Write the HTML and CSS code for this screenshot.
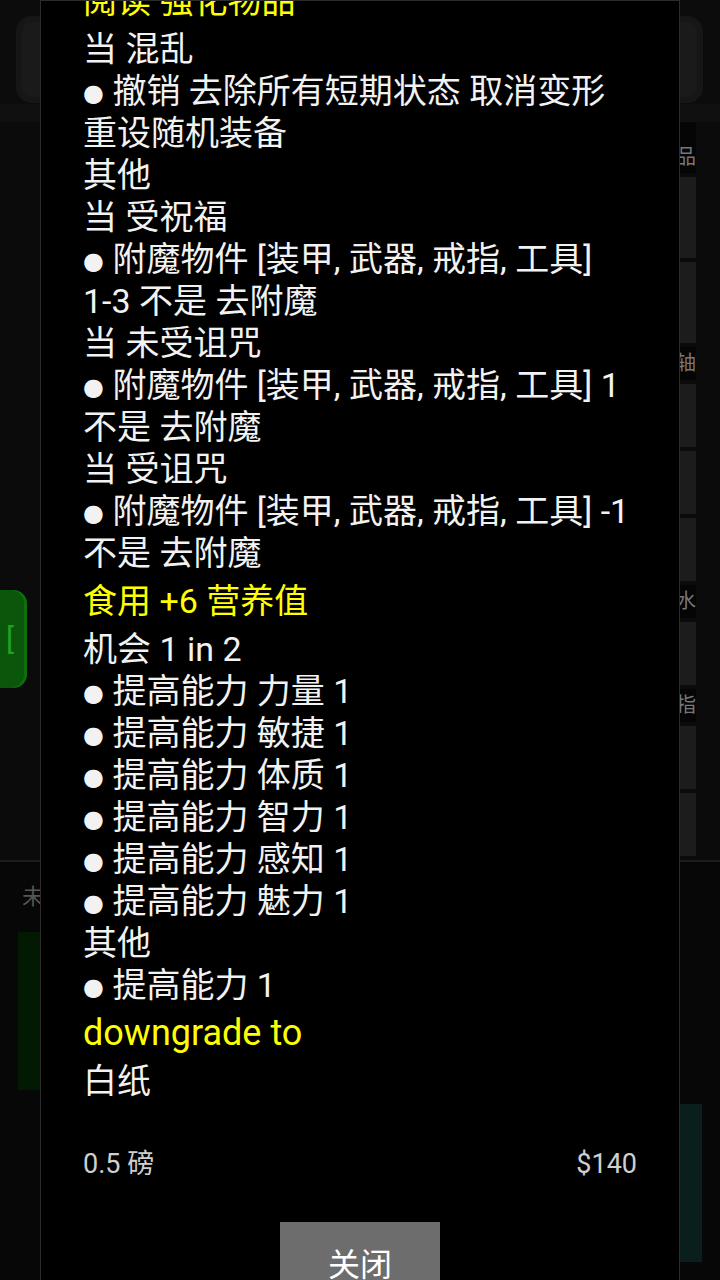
FILE: index.html
```html
<!DOCTYPE html>
<html>
<head>
    <title>物品详情</title>
    <link rel="stylesheet" href="styles.css">
</head>
<body>
    <div class="screen">
        <header class="topbar">
            <div class="tb-btn tb-left"></div>
            <div class="tb-btn tb-right"><span class="ring"></span></div>
        </header>

        <section class="middle">
            <div class="side-left">
                <div class="pill"><span>[</span></div>
            </div>
            <div class="side-right">
                <div class="cat">物品</div>
                <div class="slot tall"></div>
                <div class="slot tall"></div>
                <div class="cat">卷轴</div>
                <div class="slot"></div>
                <div class="slot"></div>
                <div class="slot"></div>
                <div class="cat">药水</div>
                <div class="slot"></div>
                <div class="cat">戒指</div>
                <div class="slot"></div>
                <div class="slot"></div>
            </div>
        </section>

        <section class="lower">
            <div class="low-left">
                <div class="low-label">未</div>
                <div class="green-box"></div>
            </div>
            <div class="low-right">
                <div class="teal-box"></div>
            </div>
        </section>
    </div>

    <div class="dialog">
        <div class="dialog-body">
            <p class="head">阅读 强化物品</p>
            <p>当 混乱</p>
            <p class="item"><span class="dot">●</span> 撤销 去除所有短期状态 取消变形 重设随机装备</p>
            <p>其他</p>
            <p>当 受祝福</p>
            <p class="item"><span class="dot">●</span> 附魔物件 [装甲, 武器, 戒指, 工具]<br>1-3 不是 去附魔</p>
            <p>当 未受诅咒</p>
            <p class="item"><span class="dot">●</span> 附魔物件 [装甲, 武器, 戒指, 工具] 1 不是 去附魔</p>
            <p>当 受诅咒</p>
            <p class="item"><span class="dot">●</span> 附魔物件 [装甲, 武器, 戒指, 工具] -1 不是 去附魔</p>

            <p class="head">食用 +6 营养值</p>
            <p>机会 1 in 2</p>
            <p class="item"><span class="dot">●</span> 提高能力 力量 1</p>
            <p class="item"><span class="dot">●</span> 提高能力 敏捷 1</p>
            <p class="item"><span class="dot">●</span> 提高能力 体质 1</p>
            <p class="item"><span class="dot">●</span> 提高能力 智力 1</p>
            <p class="item"><span class="dot">●</span> 提高能力 感知 1</p>
            <p class="item"><span class="dot">●</span> 提高能力 魅力 1</p>
            <p>其他</p>
            <p class="item"><span class="dot">●</span> 提高能力 1</p>

            <p class="head latin">downgrade to</p>
            <p>白纸</p>

            <div class="dialog-foot">
                <span>0.5 磅</span>
                <span>$140</span>
            </div>

            <div class="actions">
                <button class="close-btn">关闭</button>
            </div>
        </div>
    </div>
</body>
</html>
```

FILE: styles.css
```css
body {
    margin: 0;
    padding: 0;
    background-color: #0b0b0b;
    font-family: Roboto, "Noto Sans CJK SC", sans-serif;
    overflow: hidden;
}

.screen {
    width: 720px;
    height: 1280px;
    display: flex;
    flex-direction: column;
}

/* background app, mostly hidden by the dialog */
.topbar {
    height: 122px;
    flex-shrink: 0;
    padding: 16px 17px 0 16px;
    box-sizing: border-box;
    display: flex;
    justify-content: space-between;
    background-color: #0c0c0c;
    border-bottom: 18px solid #101010;
}

.tb-btn {
    height: 87px;
    border-radius: 16px;
    background-color: #1a1a1a;
    box-shadow: inset 0 0 0 6px #161616;
}

.tb-left {
    width: 200px;
}

.tb-right {
    width: 120px;
    position: relative;
    overflow: hidden;
}

.ring {
    position: absolute;
    left: 20px;
    top: 8px;
    width: 70px;
    height: 70px;
    border-radius: 50%;
    border: 2px solid #070707;
    background-color: #1c1c1c;
}

.middle {
    height: 738px;
    flex-shrink: 0;
    display: flex;
    justify-content: space-between;
    border-bottom: 2px solid #1c1c1c;
}

.side-left {
    width: 40px;
    padding-top: 468px;
}

.pill {
    width: 27px;
    height: 98px;
    border-radius: 0 14px 14px 0;
    background-color: #0a560a;
    box-shadow: inset -3px 0 0 #0d700d;
    color: #22a022;
    font-size: 30px;
    line-height: 98px;
    padding-left: 6px;
    box-sizing: border-box;
}

.side-right {
    width: 96px;
    margin-right: 24px;
    display: flex;
    flex-direction: column;
    gap: 4px;
}

.cat {
    height: 33px;
    flex-shrink: 0;
    line-height: 33px;
    text-align: right;
    color: #777;
    font-size: 20px;
    background-color: #050505;
}

.cat:first-child {
    height: 51px;
    line-height: 70px;
}

.slot {
    height: 63px;
    flex-shrink: 0;
    background-color: #1c1c1c;
}

.slot.tall {
    height: 81px;
}

.lower {
    flex: 1;
    display: flex;
    justify-content: space-between;
    background-color: #070707;
}

.low-left {
    width: 40px;
    padding: 20px 0 0 18px;
}

.low-label {
    color: #555;
    font-size: 22px;
    line-height: 30px;
    padding-left: 4px;
}

.green-box {
    margin-top: 20px;
    height: 158px;
    background-color: #021a02;
}

.low-right {
    width: 40px;
    padding-top: 242px;
}

.teal-box {
    width: 22px;
    height: 158px;
    background-color: #0b1e1e;
}

/* item dialog */
.dialog {
    position: fixed;
    left: 40px;
    top: 0;
    width: 640px;
    height: 1300px;
    box-sizing: border-box;
    background-color: #000;
    border: 1px solid #2c2c2c;
    overflow: hidden;
}

.dialog-body {
    margin-top: -27px;
    padding: 0 42px 0 42px;
}

.dialog-body p {
    margin: 0;
    color: #f2f2f2;
    font-size: 34px;
    line-height: 42px;
}

.dialog-body p.head {
    color: #ffff00;
    margin: 6px 0;
}

.dialog-body p.latin {
    font-size: 36px;
}

.dot {
    font-family: "DejaVu Sans", sans-serif;
    font-size: 24px;
    line-height: 20px;
    vertical-align: 2px;
}

.dialog-foot {
    display: flex;
    justify-content: space-between;
    margin-top: 46px;
    color: #cfcfcf;
    font-size: 27px;
    line-height: 32px;
}

.actions {
    display: flex;
    justify-content: center;
    margin-top: 42px;
}

.close-btn {
    width: 160px;
    height: 80px;
    border: none;
    border-radius: 0;
    background-color: #6d6d6d;
    color: #fff;
    font-family: Roboto, "Noto Sans CJK SC", sans-serif;
    font-size: 32px;
    padding: 0;
}
```
